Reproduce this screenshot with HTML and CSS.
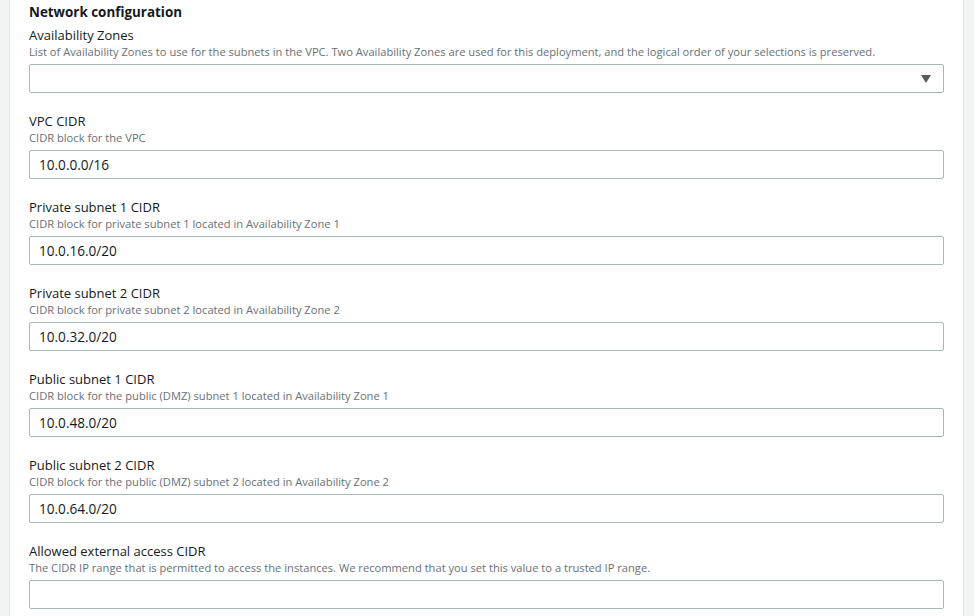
FILE: index.html
```html
<!DOCTYPE html>
<html lang="en">
<head>
  <meta charset="UTF-8">
  <title>Network configuration</title>
  <link rel="stylesheet" href="styles.css">
</head>
<body>
  <div class="panel">
    <h2>Network configuration</h2>

    <div class="field">
      <label>Availability Zones</label>
      <p class="hint">List of Availability Zones to use for the subnets in the VPC. Two Availability Zones are used for this deployment, and the logical order of your selections is preserved.</p>
      <div class="select">
        <svg class="caret" width="10" height="8" viewBox="0 0 10 8"><path d="M0 0 H10 L5 8 Z" fill="#545b64"/></svg>
      </div>
    </div>

    <div class="field">
      <label>VPC CIDR</label>
      <p class="hint">CIDR block for the VPC</p>
      <input type="text" value="10.0.0.0/16">
    </div>

    <div class="field">
      <label>Private subnet 1 CIDR</label>
      <p class="hint">CIDR block for private subnet 1 located in Availability Zone 1</p>
      <input type="text" value="10.0.16.0/20">
    </div>

    <div class="field">
      <label>Private subnet 2 CIDR</label>
      <p class="hint">CIDR block for private subnet 2 located in Availability Zone 2</p>
      <input type="text" value="10.0.32.0/20">
    </div>

    <div class="field">
      <label>Public subnet 1 CIDR</label>
      <p class="hint">CIDR block for the public (DMZ) subnet 1 located in Availability Zone 1</p>
      <input type="text" value="10.0.48.0/20">
    </div>

    <div class="field">
      <label>Public subnet 2 CIDR</label>
      <p class="hint">CIDR block for the public (DMZ) subnet 2 located in Availability Zone 2</p>
      <input type="text" value="10.0.64.0/20">
    </div>

    <div class="field">
      <label>Allowed external access CIDR</label>
      <p class="hint">The CIDR IP range that is permitted to access the instances. We recommend that you set this value to a trusted IP range.</p>
      <input type="text" value="">
    </div>
  </div>
</body>
</html>
```

FILE: styles.css
```css
body {
  margin: 0;
  background-color: #f2f3f3;
  font-family: "Open Sans", Arial, sans-serif;
  color: #16191f;
}
.panel {
  margin: 0 10px 0 9px;
  background: white;
  border-left: 1px solid #e4e7e7;
  border-right: 1px solid #e4e7e7;
  padding: 2px 19px 0 19px;
  min-height: 640px;
}
h2 {
  margin: 0 0 4px;
  font-size: 13.4px;
  line-height: 20px;
  font-weight: bold;
}
.field {
  margin-bottom: 19px;
}
label {
  display: block;
  font-size: 13px;
  line-height: 18px;
}
.hint {
  margin: 0 0 4px;
  font-size: 11.15px;
  line-height: 16px;
  color: #687078;
}
input,
.select {
  display: block;
  box-sizing: border-box;
  width: 100%;
  height: 29px;
  margin: 0;
  padding: 0 9px;
  border: 1px solid #aab7b8;
  border-radius: 2px;
  background: white;
  font-family: inherit;
  font-size: 13.6px;
  color: #16191f;
}
.select {
  display: flex;
  align-items: center;
  justify-content: flex-end;
  padding-right: 12px;
}
```
